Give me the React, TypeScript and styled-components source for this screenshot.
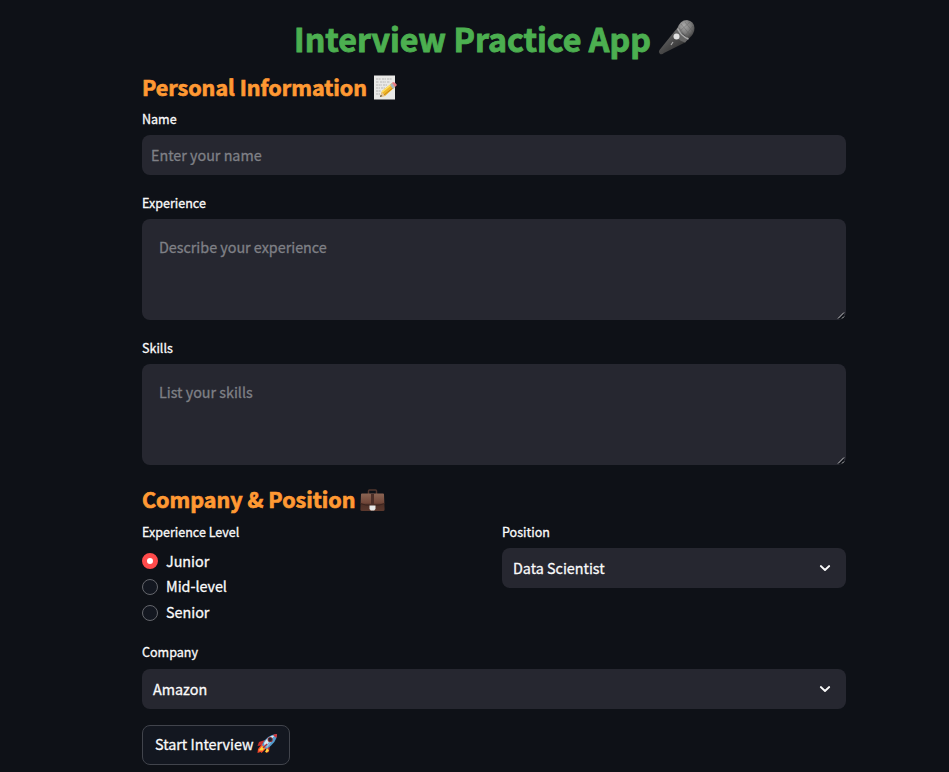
import React from 'react';
import styled, { createGlobalStyle } from 'styled-components';

const GlobalStyle = createGlobalStyle`
  * { box-sizing: border-box; }
  html, body { margin: 0; background: #0e1117; }
  body {
    height: 772px;
    overflow: hidden;
    color: #fafafa;
    font-family: "Noto Sans CJK JP", "Noto Sans", sans-serif;
    font-size: 14.33px;
    -webkit-text-stroke: 0.3px currentColor;
  }
`;

const Page = styled.main`
  width: 704px;
  margin-left: 142px;
  padding-top: 14px;
`;

const Title = styled.h1`
  display: flex;
  align-items: center;
  justify-content: center;
  gap: 7px;
  height: 48px;
  margin: 0 0 2px;
  padding-left: 1px;
  color: #4caf50;
  font-size: 32.2px;
  font-weight: 700;
  line-height: 48px;
  white-space: nowrap;
  -webkit-text-stroke-width: 0.9px;
`;

const Heading = styled.h2<{ $gap: number; $drop?: number; $iconDrop?: number }>`
  display: flex;
  align-items: center;
  gap: ${(p) => p.$gap}px;
  height: 43px;
  margin: 0;
  padding-top: ${(p) => p.$drop ?? 0}px;
  color: #ff9933;
  font-size: 21.5px;
  font-weight: 700;
  line-height: 41px;
  white-space: nowrap;
  -webkit-text-stroke-width: 0.7px;
  svg { margin-top: ${(p) => p.$iconDrop ?? 1}px; }
`;

const Field = styled.div<{ $after?: number }>`
  display: flex;
  flex-direction: column;
  margin-bottom: ${(p) => p.$after ?? 0}px;
`;

const Label = styled.label<{ $height?: number }>`
  height: ${(p) => p.$height ?? 28}px;
  font-size: 12.54px;
  line-height: 24px;
`;

const Input = styled.input`
  height: 40px;
  padding: 0 9px 2px;
  border: 0;
  border-radius: 8px;
  outline: none;
  background: #262730;
  color: #fafafa;
  font: inherit;
  &::placeholder { color: #7f8086; opacity: 1; }
`;

const AreaFrame = styled.div`
  position: relative;
  height: 101px;
`;

const TextArea = styled.textarea`
  display: block;
  width: 100%;
  height: 101px;
  padding: 16px 17px;
  border: 0;
  border-radius: 8px;
  outline: none;
  resize: none;
  background: #262730;
  color: #fafafa;
  font: inherit;
  line-height: 24px;
  &::placeholder { color: #7f8086; opacity: 1; }
`;

const Grip = styled.svg`
  position: absolute;
  right: 0;
  bottom: 0;
`;

const Columns = styled.div`
  display: grid;
  grid-template-columns: 344px 344px;
  column-gap: 16px;
  height: 120px;
`;

const Radios = styled.div`
  display: flex;
  flex-direction: column;
`;

const Option = styled.label`
  display: flex;
  align-items: center;
  gap: 8px;
  height: 26px;
  line-height: 24px;
`;

const OptionText = styled.span<{ $lift?: boolean }>`
  padding-bottom: ${(p) => (p.$lift ? 2 : 0)}px;
`;

const Dot = styled.span<{ $on?: boolean }>`
  width: 16px;
  height: 16px;
  border: ${(p) => (p.$on ? '5px solid #ff4b4b' : '1px solid #64666c')};
  border-radius: 50%;
  background: ${(p) => (p.$on ? '#fff' : '#131720')};
`;

const Select = styled.div`
  display: flex;
  align-items: center;
  justify-content: space-between;
  height: 40px;
  padding: 0 13px 0 11px;
  border-radius: 8px;
  background: #262730;
  line-height: 24px;
`;

const SelectValue = styled.span`
  padding-bottom: 1px;
`;

const Button = styled.button`
  display: flex;
  align-items: center;
  gap: 4px;
  width: 148px;
  height: 40px;
  padding: 0 0 3px 12px;
  border: 1px solid #41444c;
  border-radius: 8px;
  background: #131720;
  color: #fafafa;
  font: inherit;
  white-space: nowrap;
  -webkit-text-stroke: 0.3px currentColor;
`;

const Microphone = () => (
  <svg width="37" height="36" viewBox="0 0 37 36" aria-label="microphone">
    <defs>
      <linearGradient id="micBody" x1="0" y1="0" x2="1" y2="1">
        <stop offset="0" stopColor="#777" /><stop offset=".45" stopColor="#4c4c4c" /><stop offset="1" stopColor="#222" />
      </linearGradient>
      <radialGradient id="micHead" cx=".4" cy=".3" r=".7">
        <stop offset="0" stopColor="#aaa" /><stop offset=".6" stopColor="#777" /><stop offset="1" stopColor="#444" />
      </radialGradient>
    </defs>
    <path d="M16 12 1.5 30q-1.5 2 .5 4 2 1 4-1L28 22Z" fill="url(#micBody)" />
    <path d="M19 9q3-9 10-9 7 1 7.500 8 0 6-6 11Z" fill="url(#micHead)" />
    <path d="M19 8.500q3 7 11.500 10.500l-3.500 3.500Q18 20 16 12Z" fill="#666" />
    <path d="M19.500 8.500q3 7 11 10.500" fill="none" stroke="#aaa" strokeWidth="1.500" />
    <path d="m23 4 10 12M27 2l8 10M21 8l8 10M32 2 22 11M35 6 27 16" stroke="#4b4b4b" strokeWidth=".6" opacity=".5" />
    <circle cx="18.500" cy="16.500" r="3" fill="#e2e2e2" />
    <path d="m15 22-2 3" stroke="#aaa" strokeWidth="1.200" />
  </svg>
);

const Memo = () => (
  <svg width="23" height="25" viewBox="0 0 23 25" aria-label="memo">
    <path d="M0 .5h21v24H0z" fill="#e9e9e7" />
    <path d="M2 4h5m1 0h4m1 0h5M2 7h3m1 0h6m1 0h3M2 10h6m1 0h4M2 13h4m1 0h4M2 16h5M2 19h4" stroke="#aaa" strokeWidth=".8" strokeDasharray="2 .6" />
    <path d="m6 22 2-6L18 8l3 4-10 9Z" fill="#efb82b" />
    <path d="m8 17 10-8" stroke="#ffe36a" strokeWidth="1.4" />
    <path d="m10 20 10-8" stroke="#c88518" />
    <path d="m16 10 2-2 3 4-2 2Z" fill="#a9b7bf" />
    <path d="m18 8 1-1q2 0 4 3l-2 2Z" fill="#e77b83" />
    <path d="m6 22 2-5 3 4Z" fill="#e6c596" /><path d="m6 22 .8-2 1.4 1Z" fill="#333" />
  </svg>
);

const Briefcase = () => (
  <svg width="25" height="23" viewBox="0 0 25 23" aria-label="briefcase">
    <defs>
      <linearGradient id="leather" x2="0" y2="1">
        <stop stopColor="#8c6554" /><stop offset=".55" stopColor="#704638" /><stop offset=".62" stopColor="#4e3027" /><stop offset="1" stopColor="#5b382d" />
      </linearGradient>
    </defs>
    <path d="M8.5 5V2q0-1 1-1h6q1 0 1 1v3" fill="none" stroke="#52362e" strokeWidth="1.5" />
    <path d="M2 4.500h21q1 0 1 1l.6 15q0 1.500-1.600 1.500H2q-1.700 0-1.600-1.500L1 5.500q0-1 1-1Z" fill="url(#leather)" />
    <path d="M.5 14.5q4 2 12 2t12-2" fill="none" stroke="#3c251f" />
    <path d="M11 5h3v12h-3z" fill="#4b2e27" />
    <path d="M9.500 16.500h6V20l-1.300 1.500h-3.400L9.500 20Z" fill="#e7e9e8" />
  </svg>
);

const Rocket = () => (
  <svg width="21" height="21" viewBox="0 0 21 21" aria-label="rocket">
    <path d="m8 7-6 2-1.5 4 6-1ZM13 12l-1 7-3 1 .5-7Z" fill="#c9302e" />
    <path d="m5 11-4 5-.5 4 3-1 1 1 5-5Z" fill="#f4482c" />
    <path d="m5 13-3 4 1 1 1-1 1 1 3-3ZM10 15l-2 4 2 .500 2-2Z" fill="#ffd43b" />
    <path d="M5 12Q9 2 20 1 20 10 9 16Z" fill="#549bcd" />
    <path d="M7 10Q11 3 18 2L8 14Z" fill="#dceaf1" />
    <path d="m9 13 8-8-7 10Z" fill="#91bfdc" />
    <path d="M16 2q2-1 4-1 0 2-.7 4Z" fill="#d83437" />
    <circle cx="13.2" cy="6.5" r="2.6" fill="#8d2f34" /><circle cx="13.2" cy="6.5" r="1.7" fill="#1d2530" />
    <path d="m6 15 4-4" stroke="#b52e35" strokeWidth="1.4" />
  </svg>
);

const Chevron = () => (
  <svg width="16" height="16" viewBox="0 0 16 16" fill="none" stroke="#fafafa" strokeWidth="1.8" strokeLinecap="round" strokeLinejoin="round">
    <path d="m3.800 6 4.200 4 4.200-4" />
  </svg>
);

const Area = ({ hint }: { hint: string }) => (
  <AreaFrame>
    <TextArea placeholder={hint} />
    <Grip width="9" height="9" viewBox="0 0 9 9">
      <path d="M1 8 7 2v6Z" fill="#0e1117" />
      <path d="m1 7.5 6-6M5 7.5l2-2" stroke="#c4c4c6" strokeWidth="1" />
    </Grip>
  </AreaFrame>
);

export default function App() {
  return (
    <>
      <GlobalStyle />
      <Page>
        <Title>Interview Practice App<Microphone /></Title>
        <Heading $gap={7} $drop={2}>Personal Information<Memo /></Heading>
        <Field $after={16}><Label>Name</Label><Input placeholder="Enter your name" /></Field>
        <Field $after={16}><Label>Experience</Label><Area hint="Describe your experience" /></Field>
        <Field $after={12}><Label>Skills</Label><Area hint="List your skills" /></Field>
        <Heading $gap={4} $iconDrop={3}>Company &amp; Position<Briefcase /></Heading>
        <Columns>
          <Radios>
            <Label>Experience Level</Label>
            <Option><Dot $on /><OptionText>Junior</OptionText></Option>
            <Option><Dot /><OptionText $lift>Mid-level</OptionText></Option>
            <Option><Dot /><OptionText $lift>Senior</OptionText></Option>
          </Radios>
          <Field><Label>Position</Label><Select><SelectValue>Data Scientist</SelectValue><Chevron /></Select></Field>
        </Columns>
        <Field $after={16}><Label $height={29}>Company</Label><Select><SelectValue>Amazon</SelectValue><Chevron /></Select></Field>
        <Button>Start Interview<Rocket /></Button>
      </Page>
    </>
  );
}
